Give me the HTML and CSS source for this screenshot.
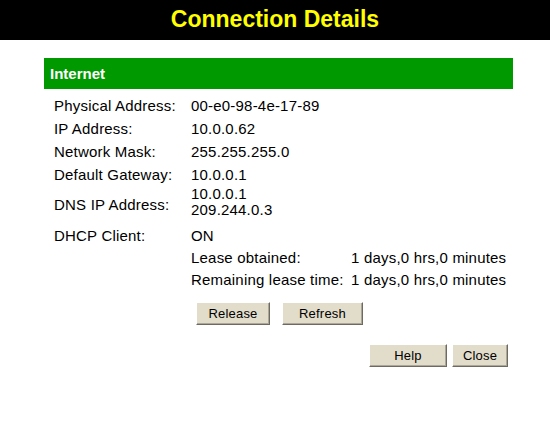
FILE: index.html
```html
<!DOCTYPE html>
<html>
<head>
<meta charset="utf-8">
<link rel="stylesheet" href="styles.css">
</head>
<body>
<div class="header">Connection Details</div>
<div class="panel">
  <div class="bar">Internet</div>
  <div class="details">
    <div class="label">Physical Address:</div><div class="value">00-e0-98-4e-17-89</div>
    <div class="label">IP Address:</div><div class="value">10.0.0.62</div>
    <div class="label">Network Mask:</div><div class="value">255.255.255.0</div>
    <div class="label">Default Gateway:</div><div class="value">10.0.0.1</div>
    <div class="label dns">DNS IP Address:</div><div class="value dnsval"><div>10.0.0.1</div><div>209.244.0.3</div></div>
    <div class="label">DHCP Client:</div><div class="value">ON</div>
    <div></div>
    <div class="lease">
      <div>Lease obtained:</div><div>1 days,0 hrs,0 minutes</div>
      <div>Remaining lease time:</div><div>1 days,0 hrs,0 minutes</div>
    </div>
    <div></div>
    <div class="actions">
      <button class="btn w-release">Release</button>
      <button class="btn w-refresh">Refresh</button>
    </div>
  </div>
  <div class="footer">
    <button class="btn w-help">Help</button>
    <button class="btn w-close">Close</button>
  </div>
</div>
</body>
</html>
```
FILE: styles.css
```css
html, body {
  margin: 0;
  padding: 0;
  background: #ffffff;
}
body {
  font-family: "Liberation Sans", Arial, sans-serif;
  font-size: 15px;
  letter-spacing: 0.2px;
  color: #000000;
}
.header {
  background: #000000;
  color: #ffff00;
  height: 40px;
  line-height: 39px;
  text-align: center;
  font-size: 23px;
  font-weight: bold;
  letter-spacing: 0;
}
.panel {
  margin: 18px 37px 0 44px;
}
.bar {
  background: #009900;
  color: #ffffff;
  font-weight: bold;
  font-size: 15px;
  letter-spacing: 0;
  height: 31px;
  line-height: 31px;
  padding-left: 6px;
}
.details {
  display: grid;
  grid-template-columns: 137px 1fr;
  padding: 5px 0 0 10px;
}
.label, .value {
  height: 23px;
  line-height: 23px;
}
.label.dns {
  height: 38px;
  line-height: 38px;
}
.value.dnsval {
  height: 38px;
  line-height: 16px;
  padding-top: 0;
}
.lease {
  display: grid;
  grid-template-columns: 160px 1fr;
  line-height: 22px;
}
.actions {
  display: flex;
  gap: 12px;
  padding: 11px 0 0 5px;
}
.footer {
  display: flex;
  justify-content: flex-end;
  gap: 5px;
  padding: 19px 5px 0 0;
}
.btn {
  font-family: "Liberation Sans", Arial, sans-serif;
  font-size: 13px;
  letter-spacing: 0.2px;
  height: 23px;
  padding: 0;
  background: #e2dccb;
  color: #000000;
  border: 1px solid;
  border-color: #ffffff #6e6a60 #6e6a60 #ffffff;
  box-shadow: inset -1px -1px 0 #aca899;
}
.w-release { width: 74px; }
.w-refresh { width: 81px; }
.w-help { width: 78px; }
.w-close { width: 56px; }
```
